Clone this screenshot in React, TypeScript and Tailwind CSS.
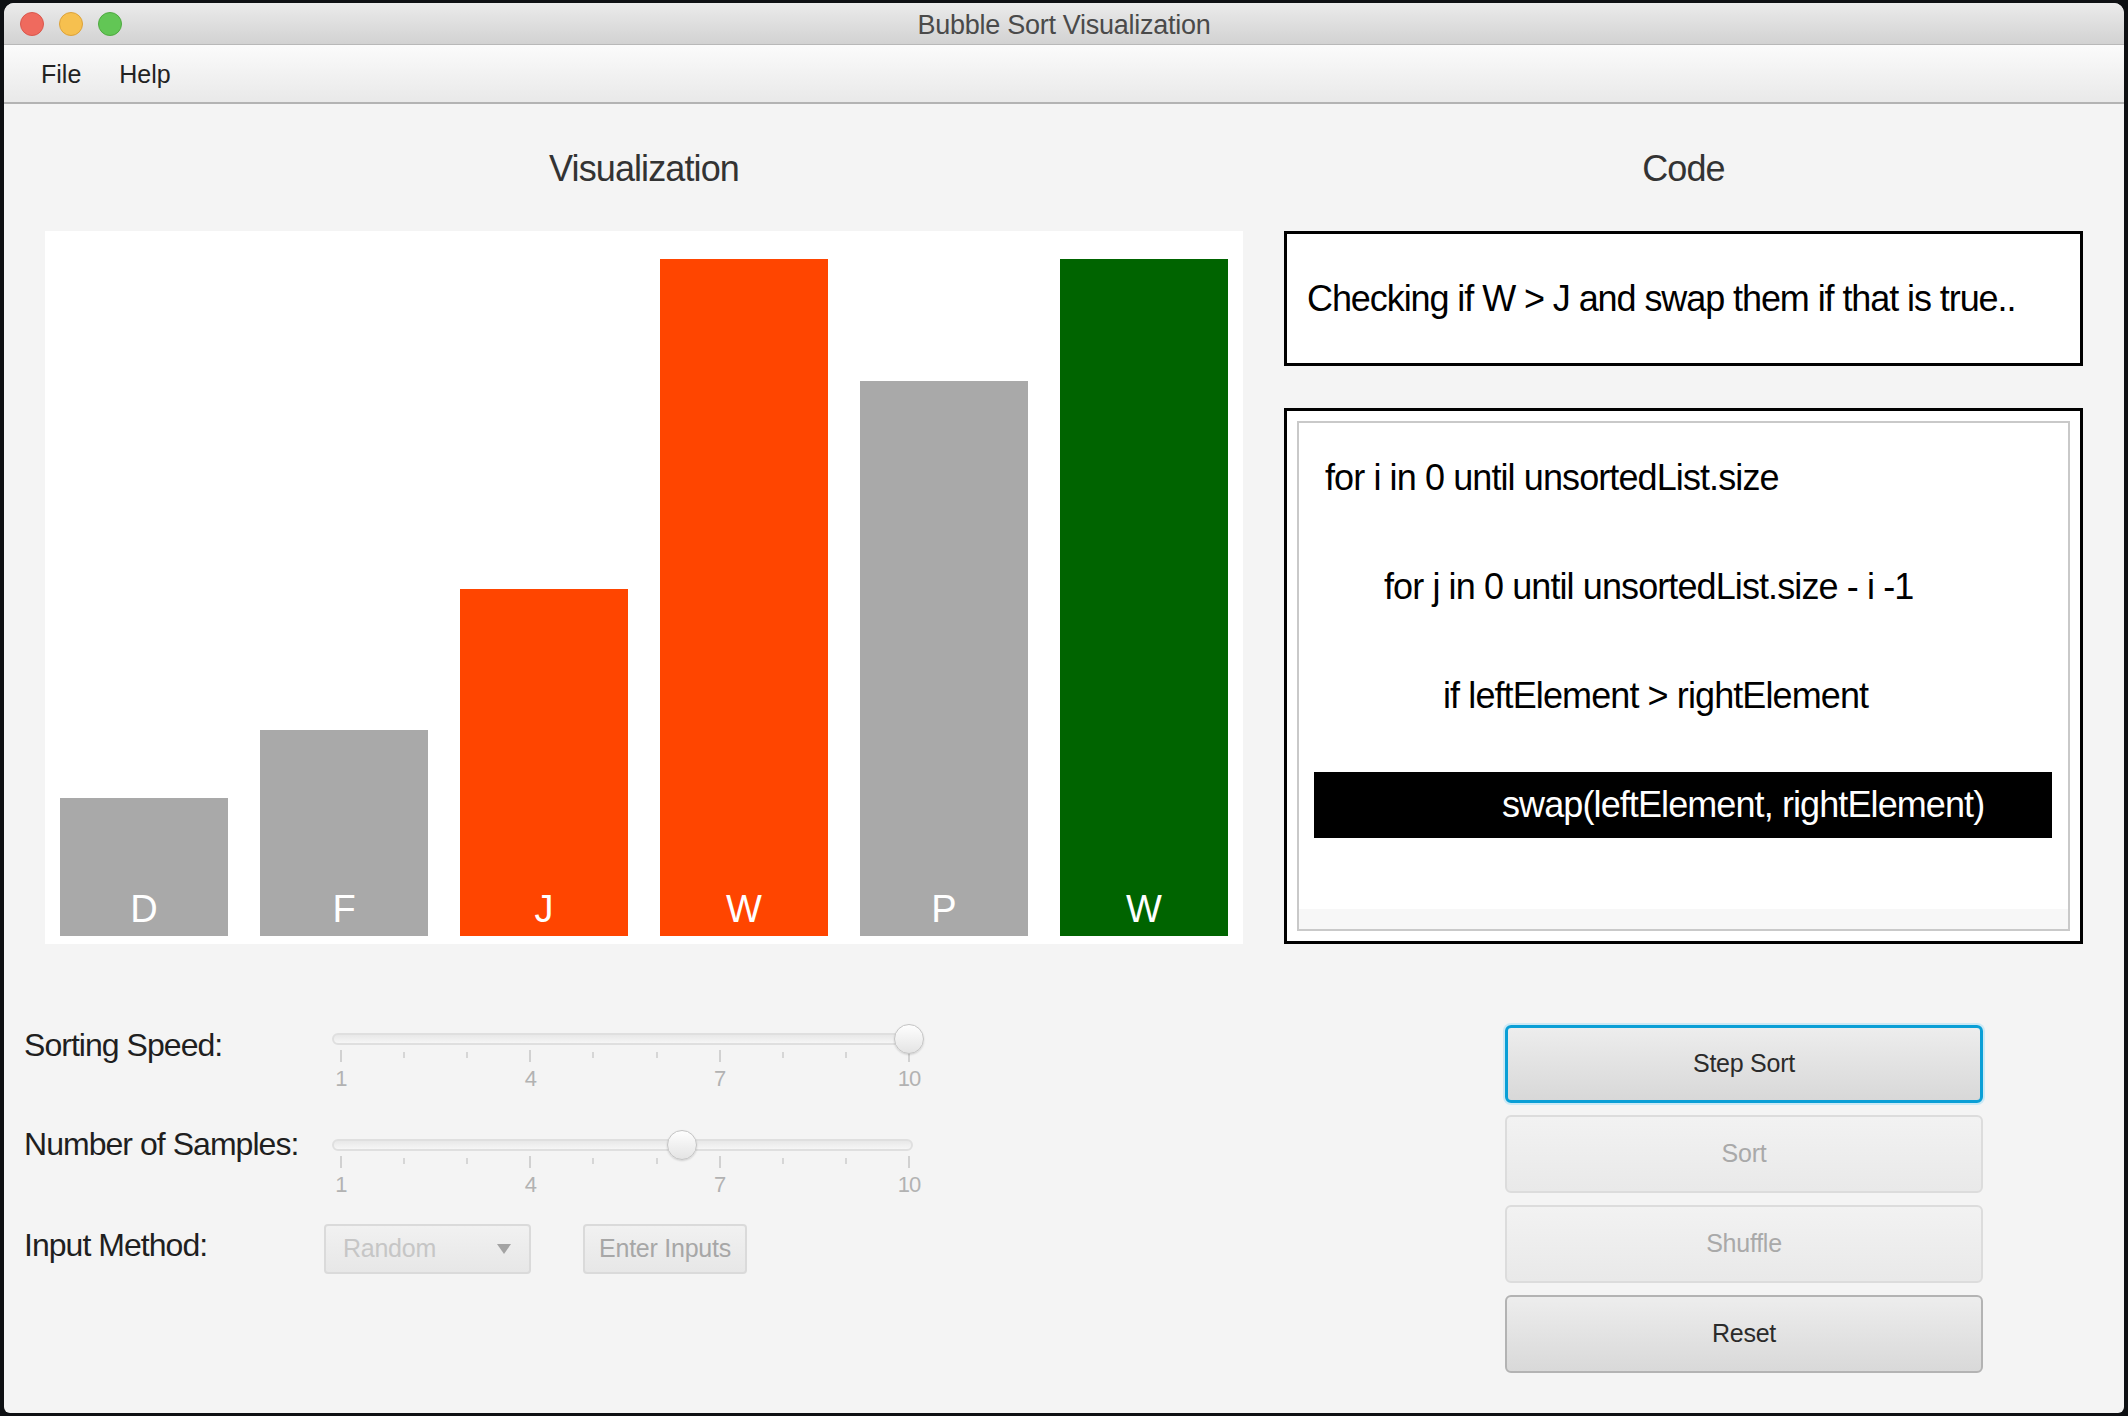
const bars = [
  { label: 'D', height: 138, color: 'bg-[#a9a9a9]' },
  { label: 'F', height: 206, color: 'bg-[#a9a9a9]' },
  { label: 'J', height: 347, color: 'bg-[#ff4500]' },
  { label: 'W', height: 677, color: 'bg-[#ff4500]' },
  { label: 'P', height: 555, color: 'bg-[#a9a9a9]' },
  { label: 'W', height: 677, color: 'bg-[#006400]' },
];

const codeLines = [
  { text: 'for i in 0 until unsortedList.size', indent: 'pl-[11px]', active: false },
  { text: 'for j in 0 until unsortedList.size - i -1', indent: 'pl-[70px]', active: false },
  { text: 'if leftElement > rightElement', indent: 'pl-[129px]', active: false },
  { text: 'swap(leftElement, rightElement)', indent: 'pl-[188px]', active: true },
];

const Slider = ({ value }: { value: number }) => {
  // thumb centre follows the value, 1..10 over the tick span
  const left = 9 + ((value - 1) / 9) * 568 - 17;
  return (
    <div className="w-[581px] pt-[13px]">
      <div className="relative h-[12px] rounded-full border-2 border-[#dfdfdf] bg-gradient-to-b from-[#e8e8e8] to-[#f6f6f6]">
        <div
          className="absolute top-[-11px] h-[30px] w-[30px] rounded-full border border-[#c4c4c4] bg-gradient-to-b from-[#fefefe] to-[#e4e4e4] shadow-[0_1px_2px_rgba(0,0,0,0.15)]"
          style={{ left }}
        />
      </div>
      <div className="mt-[5px] flex h-[12px] items-start justify-between pl-[8px] pr-[3px]">
        {Array.from({ length: 10 }, (_, i) => (
          <div key={i} className={i % 3 === 0 ? 'h-[12px] w-[2px] bg-[#d1d1d1]' : 'mt-[2px] h-[6px] w-[2px] bg-[#d6d6d6]'} />
        ))}
      </div>
      <div className="ml-[-21px] mt-[6px] flex w-[628px] justify-between text-[22px] leading-[22px] text-[#b2b2b2]">
        {['1', '4', '7', '10'].map((n) => (
          <span key={n} className="w-[60px] text-center">{n}</span>
        ))}
      </div>
    </div>
  );
};

const SideButton = ({ label, kind }: { label: string; kind: 'focus' | 'disabled' | 'normal' }) => {
  const styles = {
    focus: 'border-[3px] border-[#0a9fd6] bg-gradient-to-b from-[#ededed] to-[#d8d8d8] text-[#2b2b2b] shadow-[0_0_0_2px_#cbe9f5]',
    disabled: 'border-2 border-[#dcdcdc] bg-gradient-to-b from-[#f2f2f2] to-[#e9e9e9] text-[#a9a9a9]',
    normal: 'border-2 border-[#b3b3b3] bg-gradient-to-b from-[#ededed] to-[#d9d9d9] text-[#2b2b2b]',
  };
  return (
    <div className={`flex h-[78px] w-[478px] items-center justify-center rounded-[6px] text-[25px] tracking-[-0.01em] ${styles[kind]}`}>
      {label}
    </div>
  );
};

export default function App() {
  return (
    <div className="h-[1416px] w-[2128px] bg-[#0e1013] px-[4px] py-[3px] font-['Liberation_Sans',Arial,sans-serif]">
      <div className="flex h-full flex-col overflow-hidden rounded-t-[10px] rounded-b-[6px] bg-[#f4f4f4]">
        {/* Title bar */}
        <div className="grid h-[42px] grid-cols-[1fr_auto_1fr] items-center border-b border-[#b8b8b8] bg-gradient-to-b from-[#ebebeb] to-[#d2d2d2]">
          <div className="flex gap-[15px] pl-[16px]">
            <div className="h-[24px] w-[24px] rounded-full border border-[#d9574d] bg-[#ef6a5e]" />
            <div className="h-[24px] w-[24px] rounded-full border border-[#dca23a] bg-[#f6c04f]" />
            <div className="h-[24px] w-[24px] rounded-full border border-[#4fa940] bg-[#62c655]" />
          </div>
          <div className="pt-[2px] text-[27px] tracking-[-0.01em] text-[#4a4a4a]">Bubble Sort Visualization</div>
          <div />
        </div>

        {/* Menu bar */}
        <div className="flex h-[59px] items-center gap-[38px] border-b-2 border-[#b3b3b3] bg-gradient-to-b from-[#fbfbfb] to-[#e9e9e9] pl-[37px] pt-[2px] text-[25px] text-[#222]">
          <span>File</span>
          <span>Help</span>
        </div>

        {/* Visualization + Code */}
        <div className="flex gap-[41px] px-[41px] pt-[43px]">
          <div className="w-[1198px]">
            <h2 className="mb-[44px] h-[40px] pt-[2px] text-center text-[36px] leading-[40px] tracking-[-0.025em] text-[#333]">Visualization</h2>
            <div className="flex h-[713px] items-end gap-[32px] bg-white px-[15px] pb-[8px]">
              {bars.map((b, i) => (
                <div
                  key={i}
                  className={`flex w-[168px] items-end justify-center pb-[8px] text-[38px] leading-[38px] text-white ${b.color}`}
                  style={{ height: b.height }}
                >
                  {b.label}
                </div>
              ))}
            </div>
          </div>

          <div className="w-[799px]">
            <h2 className="mb-[44px] h-[40px] pt-[2px] text-center text-[36px] leading-[40px] tracking-[-0.025em] text-[#333]">Code</h2>
            <div className="flex h-[135px] items-center border-[3px] border-black bg-white pl-[20px] text-[36px] tracking-[-0.03em] text-black">
              Checking if W &gt; J and swap them if that is true..
            </div>
            <div className="mt-[42px] flex h-[536px] border-[3px] border-black bg-white p-[10px]">
              <div className="flex flex-1 flex-col border-2 border-[#c9c9c9]">
                <div className="flex flex-col gap-[43px] pl-[15px] pr-[16px] pt-[22px]">
                  {codeLines.map((l, i) => (
                    <div
                      key={i}
                      className={`flex h-[66px] items-center text-[36px] tracking-[-0.025em] ${l.indent} ${l.active ? 'bg-black text-white' : 'text-black'}`}
                    >
                      {l.text}
                    </div>
                  ))}
                </div>
                <div className="mt-auto h-[20px] bg-[#f7f7f7]" />
              </div>
            </div>
          </div>
        </div>

        {/* Controls */}
        <div className="flex">
          <div className="pl-[20px] pt-[76px] text-[32px] tracking-[-0.03em] text-[#1f1f1f]">
            <div className="flex items-start">
              <div className="w-[308px] pt-[7px] leading-[36px]">Sorting Speed:</div>
              <Slider value={10} />
            </div>
            <div className="mt-[36px] flex items-start">
              <div className="w-[308px] leading-[36px]">Number of Samples:</div>
              <Slider value={6.4} />
            </div>
            <div className="mt-[28px] flex items-start">
              <div className="w-[300px] pt-[3px] leading-[36px]">Input Method:</div>
              <div className="flex h-[50px] w-[207px] items-center justify-between rounded-[4px] border-2 border-[#dadada] bg-gradient-to-b from-[#f1f1f1] to-[#e7e7e7] pl-[17px] pr-[18px] text-[25px] tracking-[-0.01em] text-[#c6c6c6]">
                <span>Random</span>
                <svg width="14" height="10" viewBox="0 0 14 10">
                  <path d="M0 0h14L7 10z" fill="#a3a3a3" />
                </svg>
              </div>
              <div className="ml-[52px] flex h-[50px] w-[164px] items-center justify-center rounded-[4px] border-2 border-[#dadada] bg-gradient-to-b from-[#f1f1f1] to-[#e7e7e7] text-[25px] tracking-[-0.01em] text-[#a7a7a7]">
                Enter Inputs
              </div>
            </div>
          </div>

          <div className="ml-auto mr-[141px] flex flex-col gap-[12px] pt-[81px]">
            <SideButton label="Step Sort" kind="focus" />
            <SideButton label="Sort" kind="disabled" />
            <SideButton label="Shuffle" kind="disabled" />
            <SideButton label="Reset" kind="normal" />
          </div>
        </div>
      </div>
    </div>
  );
}
